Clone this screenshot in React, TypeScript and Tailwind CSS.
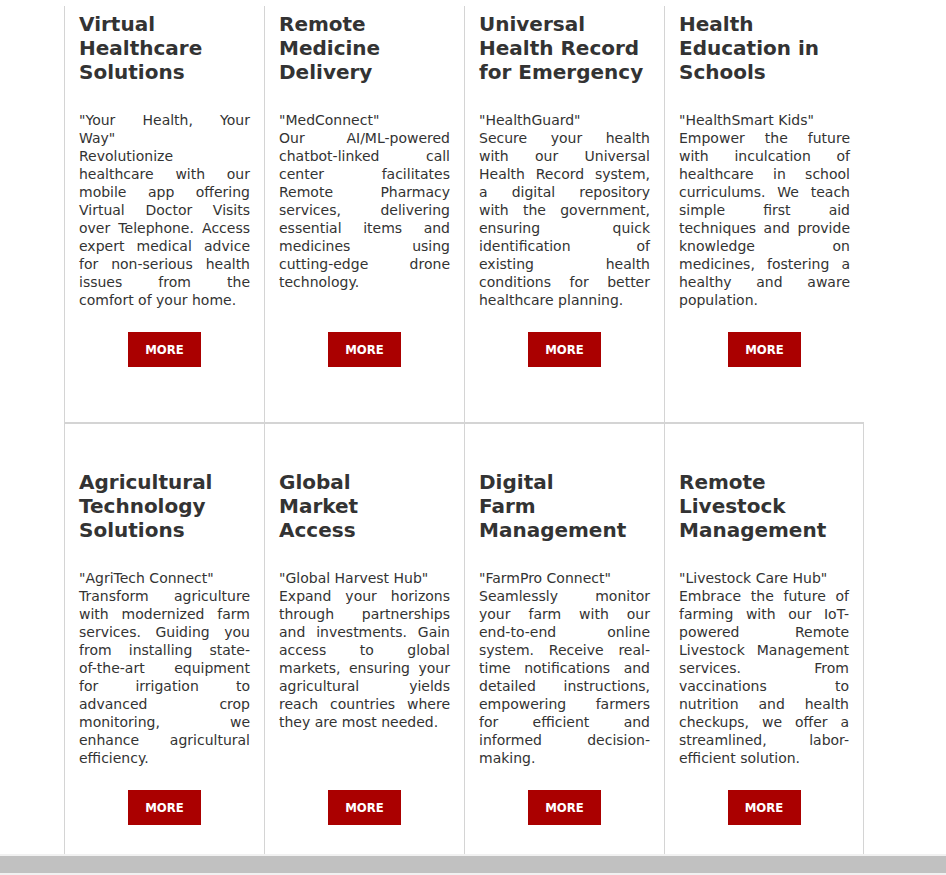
import React from 'react';

interface Service {
  title: string[];
  tag: string[];
  body: string[];
}

const healthServices: Service[] = [
  {
    title: ['Virtual', 'Healthcare', 'Solutions'],
    tag: ['"Your Health, Your', 'Way"'],
    body: [
      'Revolutionize',
      'healthcare with our',
      'mobile app offering',
      'Virtual Doctor Visits',
      'over Telephone. Access',
      'expert medical advice',
      'for non-serious health',
      'issues from the',
      'comfort of your home.',
    ],
  },
  {
    title: ['Remote', 'Medicine', 'Delivery'],
    tag: ['"MedConnect"'],
    body: [
      'Our AI/ML-powered',
      'chatbot-linked call',
      'center facilitates',
      'Remote Pharmacy',
      'services, delivering',
      'essential items and',
      'medicines using',
      'cutting-edge drone',
      'technology.',
    ],
  },
  {
    title: ['Universal', 'Health Record', 'for Emergency'],
    tag: ['"HealthGuard"'],
    body: [
      'Secure your health',
      'with our Universal',
      'Health Record system,',
      'a digital repository',
      'with the government,',
      'ensuring quick',
      'identification of',
      'existing health',
      'conditions for better',
      'healthcare planning.',
    ],
  },
  {
    title: ['Health', 'Education in', 'Schools'],
    tag: ['"HealthSmart Kids"'],
    body: [
      'Empower the future',
      'with inculcation of',
      'healthcare in school',
      'curriculums. We teach',
      'simple first aid',
      'techniques and provide',
      'knowledge on',
      'medicines, fostering a',
      'healthy and aware',
      'population.',
    ],
  },
];

const agriServices: Service[] = [
  {
    title: ['Agricultural', 'Technology', 'Solutions'],
    tag: ['"AgriTech Connect"'],
    body: [
      'Transform agriculture',
      'with modernized farm',
      'services. Guiding you',
      'from installing state-',
      'of-the-art equipment',
      'for irrigation to',
      'advanced crop',
      'monitoring, we',
      'enhance agricultural',
      'efficiency.',
    ],
  },
  {
    title: ['Global', 'Market', 'Access'],
    tag: ['"Global Harvest Hub"'],
    body: [
      'Expand your horizons',
      'through partnerships',
      'and investments. Gain',
      'access to global',
      'markets, ensuring your',
      'agricultural yields',
      'reach countries where',
      'they are most needed.',
    ],
  },
  {
    title: ['Digital', 'Farm', 'Management'],
    tag: ['"FarmPro Connect"'],
    body: [
      'Seamlessly monitor',
      'your farm with our',
      'end-to-end online',
      'system. Receive real-',
      'time notifications and',
      'detailed instructions,',
      'empowering farmers',
      'for efficient and',
      'informed decision-',
      'making.',
    ],
  },
  {
    title: ['Remote', 'Livestock', 'Management'],
    tag: ['"Livestock Care Hub"'],
    body: [
      'Embrace the future of',
      'farming with our IoT-',
      'powered Remote',
      'Livestock Management',
      'services. From',
      'vaccinations to',
      'nutrition and health',
      'checkups, we offer a',
      'streamlined, labor-',
      'efficient solution.',
    ],
  },
];

// justified block: every line stretched except the last one
const Lines: React.FC<{ lines: string[] }> = ({ lines }) => (
  <>
    {lines.map((line, i) =>
      i < lines.length - 1 ? (
        <span key={i} className="block text-justify [text-align-last:justify]">
          {line}
        </span>
      ) : (
        <span key={i} className="block text-left">
          {line}
        </span>
      )
    )}
  </>
);

const CardBody: React.FC<{ service: Service }> = ({ service }) => (
  <>
    <h3 className="text-[20px] leading-[24px] font-bold text-[#333]">
      {service.title.map((line, i) => (
        <span key={i} className="block whitespace-nowrap">
          {line}
        </span>
      ))}
    </h3>
    <div className="mt-[27px] flex-1 text-[14px] leading-[18px] text-[#333]">
      <Lines lines={service.tag} />
      <Lines lines={service.body} />
    </div>
    <div className="mt-[23px] flex justify-center">
      <button className="h-[35px] w-[73px] bg-[#aa0000] text-white text-[13px] font-bold font-['DejaVu_Sans_Condensed',sans-serif]">
        MORE
      </button>
    </div>
  </>
);

export default function App() {
  return (
    <div className="h-[875px] flex flex-col bg-white overflow-hidden font-['DejaVu_Sans',Verdana,sans-serif]">
      <div className="flex-1 overflow-hidden pt-[6px]">
        <div className="ml-[64px] w-[800px]">
          <div className="flex">
            {healthServices.map((s, i) => (
              <div
                key={i}
                className="w-[200px] flex flex-col border-l border-b border-[#d4d4d4] px-[14px] pt-[6px] pb-[55px]"
              >
                <CardBody service={s} />
              </div>
            ))}
          </div>
          <div className="flex">
            {agriServices.map((s, i) => (
              <div
                key={i}
                className={
                  i === 3
                    ? 'w-[200px] flex flex-col border-l border-t border-r border-[#d4d4d4] px-[14px] pt-[46px] pb-[55px]'
                    : 'w-[200px] flex flex-col border-l border-t border-[#d4d4d4] px-[14px] pt-[46px] pb-[55px]'
                }
              >
                <CardBody service={s} />
              </div>
            ))}
          </div>
        </div>
      </div>
      {/* horizontal scrollbar */}
      <div className="h-[21px] bg-[#f1f1f1] pt-[2px]">
        <div className="h-[17px] bg-[#c1c1c1]" />
      </div>
    </div>
  );
}
